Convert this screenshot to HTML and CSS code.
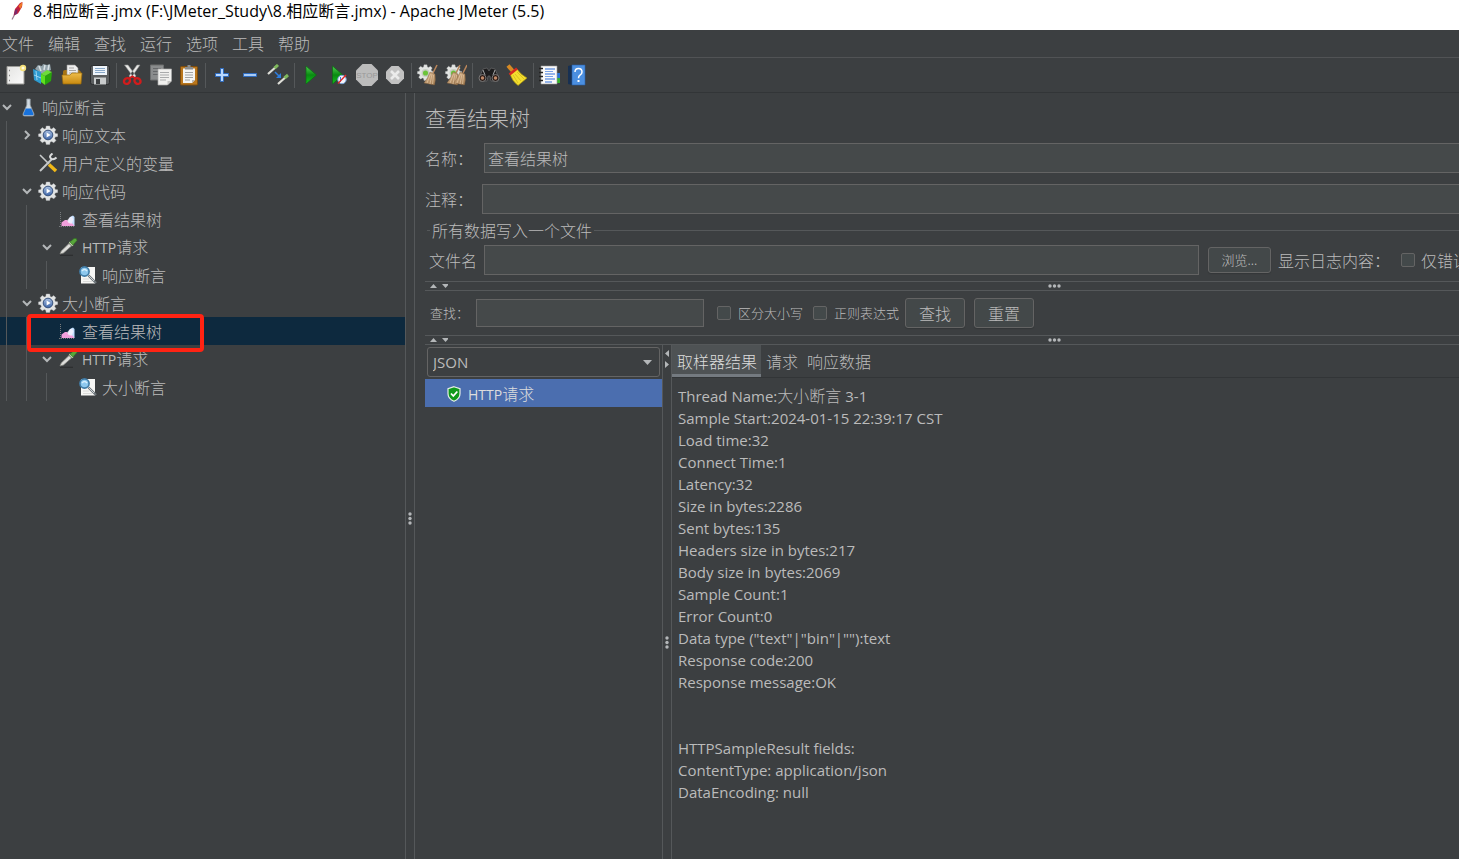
FILE: index.html
```html
<!DOCTYPE html>
<html lang="zh-CN">
<head>
<meta charset="utf-8">
<title>Apache JMeter (5.5)</title>
<link rel="stylesheet" href="styles.css">
</head>
<body>
<svg class="defs" aria-hidden="true">
  <defs>
    <linearGradient id="gGreen" x1="0" y1="0" x2="0" y2="1"><stop offset="0" stop-color="#4fd04f"/><stop offset=".5" stop-color="#0a8a12"/><stop offset="1" stop-color="#12c21c"/></linearGradient>
    <linearGradient id="gPaper" x1="0" y1="0" x2="1" y2="1"><stop offset="0" stop-color="#e4e4e2"/><stop offset="1" stop-color="#fafafa"/></linearGradient>
    <linearGradient id="gFolder" x1="0" y1="0" x2="0" y2="1"><stop offset="0" stop-color="#eebc4a"/><stop offset="1" stop-color="#c88a10"/></linearGradient>
    <linearGradient id="gGear" x1="0" y1="0" x2="0" y2="1"><stop offset="0" stop-color="#a9c0e2"/><stop offset="1" stop-color="#3a63a6"/></linearGradient>
    <linearGradient id="gBroom" x1="0" y1="0" x2="1" y2="1"><stop offset="0" stop-color="#d8b58d"/><stop offset="1" stop-color="#a07a50"/></linearGradient>
    <symbol id="gear" viewBox="0 0 20 20">
      <path fill="#e2e4e4" stroke="#b5b9bb" stroke-width=".4" d="M8.200 1h3.600l.4 2.400 1.500.6 2-1.400 2.200 2.200-1.300 2 .7 1.600 2.400.4v2.600l-2.400.5-.7 1.500 1.400 2-2.200 2.400-2.100-1.400-1.500.6-.5 2.400H8.200l-.5-2.400-1.400-.6-2 1.400-2.300-2.300 1.400-2-.6-1.600-2.300-.5V8.900l2.300-.5.6-1.500-1.400-2L4.300 2.600l2 1.400 1.500-.6z"/>
      <circle cx="10" cy="10" r="4.800" fill="url(#gGear)" stroke="#35507c" stroke-width="1"/>
      <path fill="#fff" d="M8.600 7.400l4 2.600-4 2.600z"/>
    </symbol>
    <symbol id="cog" viewBox="0 0 20 20">
      <path fill="#e2e4e2" stroke="#b5b9bb" stroke-width=".4" d="M8.200 1h3.600l.4 2.400 1.500.6 2-1.400 2.200 2.200-1.300 2 .7 1.600 2.400.4v2.600l-2.400.5-.7 1.500 1.400 2-2.200 2.400-2.100-1.400-1.500.6-.5 2.400H8.200l-.5-2.400-1.400-.6-2 1.400-2.300-2.300 1.400-2-.6-1.600-2.300-.5V8.900l2.300-.5.6-1.500-1.400-2L4.300 2.600l2 1.400 1.500-.6z"/>
      <circle cx="10" cy="10.500" r="4.600" fill="#c6cdc2"/><circle cx="10" cy="10.500" r="3" fill="#6cc43a"/>
    </symbol>
    <symbol id="chart" viewBox="0 0 20 20">
      <path d="M2.500 3v14.500M1 17.500h16" stroke="#777b7d" stroke-width="1" stroke-dasharray="1 1"/>
      <path fill="#c3e0ff" d="M10 17v-5.500L12 8l3-1.500L16.500 8v9z"/>
      <path fill="#f2a0dc" d="M3.500 17v-3.500L7 11h2l2 2.500 3 .5 2.500 3z"/>
      <path fill="#fdf5fd" d="M9 11.500l1.500 2.500 3 1 2-4.500-1.500-3-2.500 1z" opacity=".7"/>
    </symbol>
    <symbol id="dropper" viewBox="0 0 20 20">
      <path d="M2 18.300h13" stroke="#2c2e2f" stroke-width="1.200"/>
      <path d="M2 17l1.200-3L11 6.500l2.500 2.500-8 7z" fill="#dededb" stroke="#83847f" stroke-width=".8"/>
      <path d="M11.500 5l3.500 3.500" stroke="#b8d5a2" stroke-width="2"/>
      <path d="M12 5l4-3.500q3-1 3 2L15 8z" fill="#58a63a" stroke="#2d6c20" stroke-width=".6"/>
    </symbol>
    <symbol id="lens" viewBox="0 0 20 20">
      <path fill="#f7f7f5" d="M3 2h14v16.500H3z"/><path stroke="#dcdcda" d="M5 14h6M5 16.500h9"/>
      <path d="M10.500 10.500l7.500 7.500" stroke="#6f767b" stroke-width="2.400"/><path d="M11 11l5 5" stroke="#cfd5d9" stroke-width="1"/>
      <circle cx="6.500" cy="6.500" r="4.600" fill="#8dc8ee" stroke="#3f7ba6" stroke-width="1.600"/><path d="M4 6q2.500-3 5 0" stroke="#d7effd" stroke-width="1.500" fill="none"/>
    </symbol>
    <symbol id="broom" viewBox="0 0 22 22">
      <path d="M20 1l-4 8" stroke="#b9855a" stroke-width="1.600"/>
      <path fill="url(#gBroom)" stroke="#7d5b38" stroke-width=".4" d="M13 8l5 2q1 6-.5 11L7 19q4-5 6-11z"/>
      <path d="M13.500 10l-3.500 9M15 10l-2 10M16.500 11l-1 9" stroke="#ecd2b0" stroke-width=".6"/>
    </symbol>
    <symbol id="chev" viewBox="0 0 14 14"><path d="M3 5l4 4 4-4" fill="none" stroke="#b4b7b9" stroke-width="2"/></symbol>
  </defs>
</svg>

<header class="titlebar">
  <svg class="feather" viewBox="0 0 14 20" aria-hidden="true"><path d="M2 18.500L5 13" stroke="#9a7a90" stroke-width="1.200"/><path d="M3.500 14.500L5 8l5-6 2.500-1-.5 5-4 6.500z" fill="#c3203c"/><path d="M8.500 5L12 1l.3 3-1.800 4z" fill="#ef7a28"/><path d="M4 14L5 9l2.500-1-.5 5z" fill="#7a2a6c"/></svg>
  <h1>8.相应断言.jmx (F:\JMeter_Study\8.相应断言.jmx) - Apache JMeter (5.5)</h1>
</header>

<nav class="menubar">
  <button>文件</button><button>编辑</button><button>查找</button><button>运行</button><button>选项</button><button>工具</button><button>帮助</button>
</nav>

<div class="toolbar" role="toolbar" aria-label="工具栏">
  <button aria-label="新建"><svg viewBox="0 0 22 22"><path fill="url(#gPaper)" stroke="#9c9c98" d="M2 2.500h17v17.500H2z"/><path d="M4 6.500h1M4 11.500h1M4 16.500h1" stroke="#888" stroke-width="1.500"/><circle cx="18" cy="4" r="3.200" fill="#f4df78"/><circle cx="18" cy="4" r="1.500" fill="#fffce0"/></svg></button>
  <button aria-label="模板"><svg viewBox="0 0 22 22"><path fill="#93a4ac" d="M2 5l3-4 4 1 1-2 4 1 3-1 1 6-9 4z"/><path d="M6 2l2 5M12 1l-1 5M16 1l-1 5" stroke="#dbe3e6" stroke-width="1.500"/><path fill="#2d9bd0" d="M0 5l8 3v12l-7-4z"/><path d="M3 7l1 9M1 11l7 3" stroke="#9ad6f2"/><path fill="#5ee020" d="M8 10l4 2v9l-4-3z"/><path fill="#28a50c" d="M12 12l7-4-1 9-6 4z"/><path fill="#6edc3a" d="M8 10l6-4 5 2-7 4z"/></svg></button>
  <button aria-label="打开"><svg viewBox="0 0 22 22"><path fill="#a87513" d="M2 8q0-2 2-2h14l2 2v11H2z"/><path fill="#eee" stroke="#999" stroke-width=".6" d="M6 1h8l3 3v8H6z"/><path d="M8 4h5M8 6.500h7M8 9h7" stroke="#a5a5a5"/><path fill="url(#gFolder)" stroke="#9a6a0c" stroke-width=".7" d="M1 11h8l2-2h10l-1 11H2z"/></svg></button>
  <button aria-label="保存"><svg viewBox="0 0 22 22"><rect x="1.500" y="1.500" width="19" height="19" rx="2" fill="#5a5d5f" stroke="#2c2e30"/><path fill="#eef4fa" d="M4 2h14v9H4z"/><path d="M6 4.500h10M6 6.500h10M6 8.500h10" stroke="#89a8c8"/><path fill="#c9cccd" d="M5 13.500h12v7H5z"/><path fill="#3b3e40" d="M7 15h4v5H7z"/></svg></button>
  <i class="sep"></i>
  <button aria-label="剪切"><svg viewBox="0 0 22 22"><path d="M2.500 1l9.500 13 2-2L6 1zM18 1L9 14l-2-2 8-11z" fill="#e8e8e6" stroke="#8e9092" stroke-width=".6"/><g fill="none" stroke="#d01c1c" stroke-width="2.400"><ellipse cx="5" cy="17" rx="3.200" ry="2.700" transform="rotate(-35 5 17)"/><ellipse cx="15.500" cy="17" rx="3.200" ry="2.700" transform="rotate(35 15.500 17)"/></g><path d="M7 14.500l3.300-2 3.300 2" stroke="#d01c1c" stroke-width="2" fill="none"/></svg></button>
  <button aria-label="复制"><svg viewBox="0 0 22 22"><path fill="#8a8c8d" stroke="#6c6e6f" d="M.5 1h13v15H.5z"/><path d="M3 4.500h8M3 7.500h7M3 10.500h5" stroke="#66686a"/><path fill="#f0f0ee" stroke="#aaa" stroke-width=".7" d="M8 5h13.500v12l-4 4H8z"/><path d="M10 8.500h9M10 11h9M10 13.500h9M10 16h6" stroke="#a9abac"/><path fill="#c4c4c2" d="M17.500 21v-4h4z"/></svg></button>
  <button aria-label="粘贴"><svg viewBox="0 0 22 22"><rect x="2.500" y="2.500" width="17" height="18.500" rx="1" fill="#b9761c" stroke="#7c4c0e"/><path fill="#f4f4f2" d="M5 4.500h12V16l-3 3H5z"/><path d="M7 8.500h8M7 11h8M7 13.500h8M7 16h5" stroke="#a0a2a3"/><path fill="#8b8e90" d="M7 5.500V3h2.500V1h3v2H15v2.500z"/><path fill="#b8b8b6" d="M14 19v-3h3z"/></svg></button>
  <i class="sep"></i>
  <button aria-label="展开"><svg viewBox="0 0 22 22"><path d="M9.500 4.500h3v5h5v3h-5v5h-3v-5h-5v-3h5z" fill="#b9d9ff" stroke="#2f6cc0" stroke-width="1"/></svg></button>
  <button aria-label="折叠"><svg viewBox="0 0 22 22"><path d="M4.500 9.500h13v3h-13z" fill="#a9cbf4" stroke="#2f6cc0" stroke-width="1"/></svg></button>
  <button aria-label="切换"><svg viewBox="0 0 22 22"><path d="M1 10l9-8M11 20l9-8" stroke="#deded8" stroke-width="2.200"/><path d="M7.500 4.200L11 1M17.500 14l3.500-3" stroke="#7fb85c" stroke-width="3"/><path d="M8 8l5 5" stroke="#2d7ee0" stroke-width="1.500"/><path fill="#2d7ee0" d="M14 9v5H9z"/></svg></button>
  <i class="sep"></i>
  <button aria-label="启动"><svg viewBox="0 0 22 22"><path fill="url(#gGreen)" stroke="#0b6b12" stroke-width=".7" d="M6 2l10.500 9L6 20z"/></svg></button>
  <button aria-label="不停顿启动"><svg viewBox="0 0 22 22"><path fill="url(#gGreen)" stroke="#0b6b12" stroke-width=".7" d="M4.500 2L15 11 4.500 20z"/><circle cx="14" cy="15.500" r="4.200" fill="#f1f5fb" stroke="#7ca3d8"/><path d="M12.500 13v5" stroke="#3e7fd2"/><path d="M10 19.500l8-8.500" stroke="#e02828" stroke-width="1.400"/></svg></button>
  <button aria-label="停止"><svg viewBox="0 0 22 22"><path fill="#bcbcbc" d="M6.500 0h9L22 6.500v9L15.500 22h-9L0 15.500v-9z"/><text x="11" y="14" class="stop">STOP</text></svg></button>
  <button aria-label="关闭"><svg viewBox="0 0 22 22"><path fill="#c2c2c2" d="M7.500 2h7L20 7.500v7L14.500 20h-7L2 14.500v-7z"/><path d="M7 7l8 8M15 7l-8 8" stroke="#ebebeb" stroke-width="2.600"/></svg></button>
  <i class="sep"></i>
  <button aria-label="清除"><svg viewBox="0 0 22 22"><use href="#cog" width="17" height="17"/><use href="#broom" width="22" height="22"/></svg></button>
  <button aria-label="清除全部"><svg viewBox="0 0 22 22"><use href="#cog" width="17" height="17"/><use href="#broom" x="-5" width="22" height="22"/><use href="#broom" x="2" width="22" height="22"/></svg></button>
  <i class="sep"></i>
  <button aria-label="搜索"><svg viewBox="0 0 22 22"><path fill="#1c1c1d" stroke="#68696a" stroke-width=".7" d="M2 12l3-7 4-1 2 3 2-3 4 1 3 7v5h-7l-1-5H10l-1 5H2z"/><path d="M5 6l2 5M17 6l-2 5" stroke="#a5a6a7"/><circle cx="4.500" cy="14" r="3.500" fill="#2d1d18" stroke="#777"/><circle cx="17.500" cy="14" r="3.500" fill="#2d1d18" stroke="#777"/><circle cx="4.500" cy="14" r="1.700" fill="#c08a6a"/><circle cx="17.500" cy="14" r="1.700" fill="#c08a6a"/></svg></button>
  <button aria-label="重置搜索"><svg viewBox="0 0 22 22"><path d="M2 1.500l6 7" stroke="#d68a24" stroke-width="4"/><path fill="#f4df2e" stroke="#a8900f" stroke-width=".7" d="M4 10l7-5q3 5 10 9l-9 7.500Q6 17 4 10z"/><path d="M7 11l5 8M9 10l6 7M11 8l7 7" stroke="#cdb51c" stroke-width=".7"/><path d="M3.500 10.500l7.500-6" stroke="#d42a20" stroke-width="2.600"/></svg></button>
  <i class="sep"></i>
  <button aria-label="函数助手"><svg viewBox="0 0 22 22"><path fill="#35b52d" d="M17 14h4v5h-4z"/><path fill="#2a74d6" d="M17 9h4v5h-4z"/><path fill="#fafafa" stroke="#999" stroke-width=".6" d="M2 2h16v18H2z"/><path d="M6 5h10M6 10h10M6 15h10M6 18h7" stroke="#2f6fd8" stroke-width="1.200"/><path d="M6 7.500h8M6 12.500h8" stroke="#7aa4e8"/><path d="M0 4.500h4M0 8.500h4M0 12.500h4M0 16.500h4" stroke="#242424" stroke-width="1.600"/></svg></button>
  <button aria-label="帮助"><svg viewBox="0 0 22 22"><path fill="#173052" d="M1 2l4-1v20l-4-1z"/><path fill="#4b8fe0" stroke="#2a5ea8" stroke-width=".6" d="M5 1h13v20H5z"/><path d="M8 8q0-3.500 3.500-3.500T15 8q0 2-2 3.200-1.500 1-1.500 3" fill="none" stroke="#fff" stroke-width="1.500"/><path d="M10.500 16h2v2h-2z" fill="#fff"/></svg></button>
</div>

<div class="workspace">
  <ul class="tree">
    <li class="row"><svg class="chev"><use href="#chev"/></svg><svg class="icon" viewBox="0 0 20 20"><path d="M8.800 2v6L5 17q-.5 2 1.500 2h8q2 0 1.500-2L12.200 8V2z" fill="#d2dbe2" stroke="#8f989e" stroke-width=".8"/><path fill="#1872dc" d="M7.800 11.500h5.400l2.300 5.500q.3 1.200-1 1.200h-8q-1.300 0-1-1.200z"/></svg><span>响应断言</span></li>
    <li class="row"><i class="guide"></i><svg class="chev closed"><use href="#chev"/></svg><svg class="icon"><use href="#gear"/></svg><span>响应文本</span></li>
    <li class="row"><i class="guide"></i><i class="chev"></i><svg class="icon" viewBox="0 0 20 20"><path d="M2 2l9 9" stroke="#c8cbcc" stroke-width="1.600"/><path d="M2 18L14 6" stroke="#c6c9ca" stroke-width="2"/><path d="M18.500 4.500q-3 3-5.500 1t1.500-5" fill="none" stroke="#dcdedf" stroke-width="2"/><path d="M11 11.500l7 6.500" stroke="#f0b818" stroke-width="3.400"/></svg><span>用户定义的变量</span></li>
    <li class="row"><i class="guide"></i><svg class="chev"><use href="#chev"/></svg><svg class="icon"><use href="#gear"/></svg><span>响应代码</span></li>
    <li class="row"><i class="guide"></i><i class="guide"></i><i class="chev"></i><svg class="icon"><use href="#chart"/></svg><span>查看结果树</span></li>
    <li class="row"><i class="guide"></i><i class="guide"></i><svg class="chev"><use href="#chev"/></svg><svg class="icon"><use href="#dropper"/></svg><span><span class="latin">HTTP</span>请求</span></li>
    <li class="row"><i class="guide"></i><i class="guide"></i><i class="guide"></i><i class="chev"></i><svg class="icon"><use href="#lens"/></svg><span>响应断言</span></li>
    <li class="row"><i class="guide"></i><svg class="chev"><use href="#chev"/></svg><svg class="icon"><use href="#gear"/></svg><span>大小断言</span></li>
    <li class="row selected"><i class="guide"></i><i class="guide"></i><i class="chev"></i><svg class="icon"><use href="#chart"/></svg><span>查看结果树</span><i class="marker"></i></li>
    <li class="row"><i class="guide"></i><i class="guide"></i><svg class="chev"><use href="#chev"/></svg><svg class="icon"><use href="#dropper"/></svg><span><span class="latin">HTTP</span>请求</span></li>
    <li class="row"><i class="guide"></i><i class="guide"></i><i class="guide"></i><i class="chev"></i><svg class="icon"><use href="#lens"/></svg><span>大小断言</span></li>
  </ul>

  <div class="vsplit"><svg class="vdots" viewBox="0 0 4 13"><circle cx="2" cy="2" r="1.700"/><circle cx="2" cy="6.500" r="1.700"/><circle cx="2" cy="11" r="1.700"/></svg></div>

  <main class="panel">
    <h2>查看结果树</h2>
    <div class="field"><label for="name">名称：</label><input id="name" class="box" type="text" value="查看结果树"></div>
    <div class="field comment"><label for="comment">注释：</label><input id="comment" class="box" type="text"></div>
    <div class="group-title"><span>所有数据写入一个文件</span></div>
    <div class="file-row">
      <label for="file">文件名</label>
      <input id="file" class="box" type="text">
      <button class="btn small">浏览...</button>
      <span>显示日志内容：</span>
      <label class="check errors"><input type="checkbox">仅错误</label>
    </div>
    <div class="hsplit"><svg class="arrows" viewBox="0 0 18 6"><path d="M0 5l3.500-4L7 5zM12 1h7l-3.500 4z"/></svg><svg class="hdots" viewBox="0 0 13 4"><circle cx="2" cy="2" r="1.700"/><circle cx="6.500" cy="2" r="1.700"/><circle cx="11" cy="2" r="1.700"/></svg></div>
    <div class="search-row">
      <label for="search">查找：</label>
      <input id="search" class="box" type="text">
      <label class="check"><input type="checkbox">区分大小写</label>
      <label class="check"><input type="checkbox">正则表达式</label>
      <button class="btn">查找</button>
      <button class="btn">重置</button>
    </div>
    <div class="hsplit"><svg class="arrows" viewBox="0 0 18 6"><path d="M0 5l3.500-4L7 5zM12 1h7l-3.500 4z"/></svg><svg class="hdots" viewBox="0 0 13 4"><circle cx="2" cy="2" r="1.700"/><circle cx="6.500" cy="2" r="1.700"/><circle cx="11" cy="2" r="1.700"/></svg></div>

    <div class="results">
      <div class="samples">
        <div class="combo"><select aria-label="渲染方式"><option>JSON</option></select><svg viewBox="0 0 9 5"><path d="M0 0h9L4.500 5z"/></svg></div>
        <div class="sample"><svg viewBox="0 0 14 16"><path d="M7 .7l6 2v5q0 5-6 7.600-6-2.600-6-7.600v-5z" fill="#0f9a1c" stroke="#e8efe8" stroke-width="1.200"/><path d="M4 7.500l2.300 2.500L10.300 5.500" fill="none" stroke="#fff" stroke-width="1.800"/></svg><span><span class="latin">HTTP</span>请求</span></div>
      </div>
      <div class="vsplit inner"><svg class="varrows" viewBox="0 0 6 20"><path d="M5 1v7L1 4.500zM1 12v7l4-3.500z"/></svg><svg class="vdots" viewBox="0 0 4 13"><circle cx="2" cy="2" r="1.700"/><circle cx="2" cy="6.500" r="1.700"/><circle cx="2" cy="11" r="1.700"/></svg></div>
      <div class="detail">
        <div class="tabs" role="tablist"><button role="tab" class="active">取样器结果</button><button role="tab">请求</button><button role="tab">响应数据</button></div>
        <div class="output">
          <p>Thread Name:<span class="cjk">大小断言</span> 3-1</p>
          <p>Sample Start:2024-01-15 22:39:17 CST</p>
          <p>Load time:32</p>
          <p>Connect Time:1</p>
          <p>Latency:32</p>
          <p>Size in bytes:2286</p>
          <p>Sent bytes:135</p>
          <p>Headers size in bytes:217</p>
          <p>Body size in bytes:2069</p>
          <p>Sample Count:1</p>
          <p>Error Count:0</p>
          <p>Data type ("text"|"bin"|""):text</p>
          <p>Response code:200</p>
          <p>Response message:OK</p>
          <p class="fields">HTTPSampleResult fields:</p>
          <p>ContentType: application/json</p>
          <p>DataEncoding: null</p>
        </div>
      </div>
    </div>
  </main>
</div>
</body>
</html>
```
FILE: styles.css
```css
* { box-sizing: border-box; }
body {
  margin: 0;
  min-height: 100vh;
  display: flex;
  flex-direction: column;
  background: #3c3f41;
  color: #bbbbbb;
  font: 300 16px/20px "Noto Sans CJK SC", sans-serif;
  overflow: hidden;
}
h1, h2, p, ul { margin: 0; padding: 0; font-weight: inherit; }
button, input, select { font: inherit; color: inherit; margin: 0; padding: 0; border: 0; background: none; }
i { font-style: normal; }
svg { display: block; flex: none; }
.defs { position: absolute; width: 0; height: 0; }
.latin { font-family: "Open Sans", sans-serif; font-size: 14px; font-weight: 400; }
.cjk { font: 300 16px/20px "Noto Sans CJK SC", sans-serif; }

.titlebar { display: flex; height: 30px; padding: 0 10px 8px; gap: 9px; align-items: center; background: #fff; color: #000; }
.titlebar h1 { font: 400 16px/22px "Open Sans", "Noto Sans CJK SC", sans-serif; white-space: nowrap; }
.feather { width: 14px; height: 20px; }

.menubar { display: flex; gap: 14px; height: 28px; padding: 0 2px 2px; border-bottom: 1px solid #515355; }
.toolbar { display: flex; align-items: center; height: 35px; padding-left: 2px; border-bottom: 1px solid #323537; }
.toolbar button { display: flex; justify-content: center; align-items: center; width: 28px; height: 28px; }
.toolbar svg { width: 22px; height: 22px; }
.sep { width: 1px; height: 25px; margin: 0 2px; background: #55585a; }
.stop { font: 400 8px "Liberation Sans", sans-serif; text-anchor: middle; fill: #999999; }

.workspace { display: flex; flex: 1; }
.tree { width: 405px; flex: none; list-style: none; }
.row { position: relative; display: flex; align-items: center; height: 28px; white-space: nowrap; }
.row > span { margin-left: 4px; }
.selected { background: #0d293e; }
.guide { width: 14px; height: 28px; margin-left: 6px; border-left: 1px solid #55585a; }
.chev { width: 14px; height: 14px; margin-right: 4px; flex: none; }
.closed { transform: rotate(-90deg); }
.icon { width: 20px; height: 20px; }
.marker { position: absolute; left: 27px; top: -3px; width: 177px; height: 38px; border: 4px solid #ff2313; border-radius: 4px; z-index: 1; }

.vsplit { display: flex; flex-direction: column; align-items: center; justify-content: center; width: 10px; flex: none; padding-top: 84px; border: solid #55585a; border-width: 0 1px; }
.vdots { width: 4px; height: 13px; }
.vdots, .hdots, .arrows, .varrows { fill: #b4b7b9; }

.panel { flex: 1; min-width: 0; display: flex; flex-direction: column; padding-left: 10px; }
.panel h2 { font-size: 21px; line-height: 30px; padding: 9px 0 11px; }
.box { min-width: 0; height: 30px; border: 1px solid #646464; background: #45494a; padding: 0 3px; }
.field { display: flex; align-items: center; margin-bottom: 11px; }
.field label { width: 59px; flex: none; }
.field .box { flex: 1; border-right: 0; }
.comment label { width: 57px; }
.comment { margin-bottom: 6px; }
.group-title { display: flex; align-items: center; gap: 2px; height: 20px; margin-bottom: 5px; }
.group-title::before, .group-title::after { content: ""; height: 1px; background: #55585a; }
.group-title::before { width: 3px; margin-left: 2px; }
.group-title::after { flex: 1; }
.file-row { display: flex; align-items: center; padding-left: 4px; white-space: nowrap; margin-bottom: 6px; }
.file-row > label:first-child { width: 55px; }
.file-row .box { flex: 1; }
.file-row > span { width: 123px; }
.btn { width: 60px; height: 30px; border: 1px solid #646464; border-radius: 3px; background: #434849; box-shadow: 0 1px 1px #343739; white-space: nowrap; }
.small { width: 63px; height: 26px; margin: 0 7px 0 9px; font-size: 13px; }
.check { display: flex; align-items: center; gap: 7px; }
.check input { appearance: none; width: 14px; height: 14px; flex: none; border: 1px solid #646464; border-radius: 2px; background: #43494a; }
.errors { width: 58px; gap: 6px; overflow: hidden; }

.hsplit { display: flex; align-items: center; height: 10px; padding-left: 5px; border: solid #55585a; border-width: 1px 0; }
.arrows { width: 18px; height: 6px; }
.hdots { width: 13px; height: 4px; margin-left: 600px; }

.search-row { display: flex; align-items: center; height: 44px; padding-left: 5px; font-size: 13px; white-space: nowrap; }
.search-row > label:first-child { width: 46px; }
.search-row .box { width: 228px; height: 28px; margin-right: 13px; }
.search-row .check { width: 96px; }
.search-row .btn { font-size: 16px; margin-right: 9px; }
.search-row .check + .btn { margin-left: -4px; }

.results { display: flex; flex: 1; }
.samples { width: 237px; flex: none; }
.combo { display: flex; align-items: center; height: 30px; margin: 2px; padding-right: 7px; border: 1px solid #646464; border-radius: 3px; }
.combo select { flex: 1; appearance: none; padding-left: 5px; font: 400 15px/28px "Open Sans", sans-serif; }
.combo svg { width: 9px; height: 5px; fill: #b4b7b9; }
.sample { display: flex; align-items: center; gap: 7px; height: 28px; padding: 2px 0 0 22px; background: #4b6eaf; color: #dddddd; }
.sample svg { width: 14px; height: 16px; }
.inner { padding: 4px 0 0; justify-content: flex-start; }
.varrows { width: 6px; height: 20px; margin-bottom: 56px; }
.inner .vdots { margin: auto; }
.detail { flex: 1; min-width: 0; }
.tabs { display: flex; height: 33px; border-bottom: 1px solid #323537; }
.tabs button { height: 32px; padding: 2px 4px 0 5px; border-bottom: 3px solid transparent; white-space: nowrap; }
.tabs .active { background: #4e5254; border-color: #747a80; color: #dddddd; }
.output { padding: 7px 6px; font: 400 15px/22px "Open Sans", sans-serif; }
.output p { height: 22px; }
.output .fields { margin-top: 44px; }
```
